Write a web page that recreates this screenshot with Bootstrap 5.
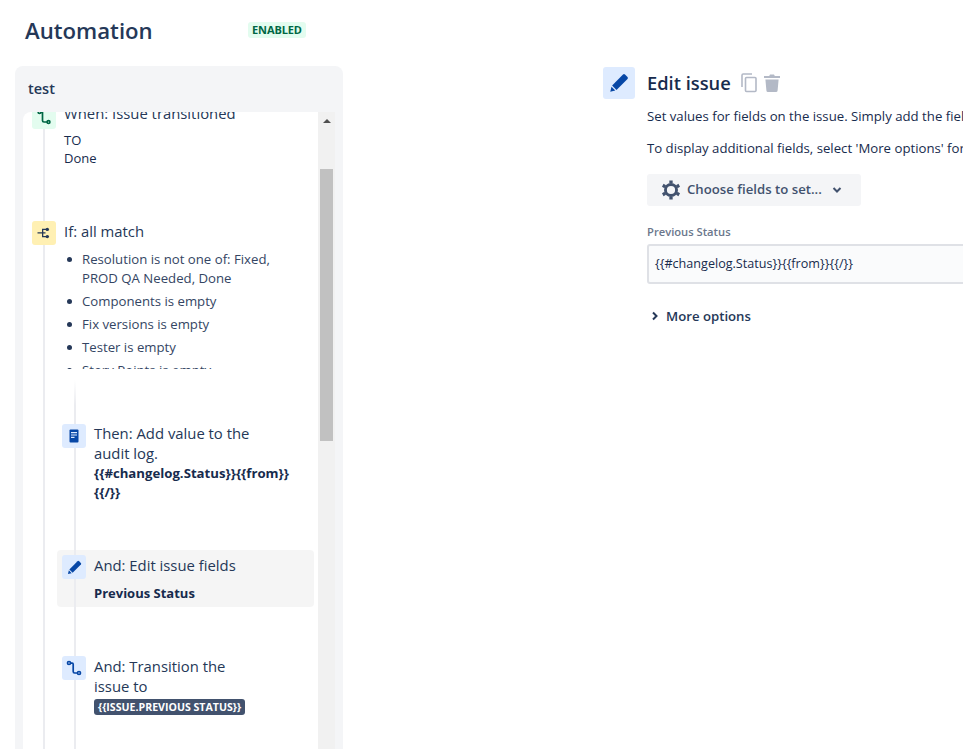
<!DOCTYPE html>
<html lang="en">
<head>
<meta charset="utf-8">
<title>Automation</title>
<link href="https://cdn.jsdelivr.net/npm/bootstrap@5.3.0/dist/css/bootstrap.min.css" rel="stylesheet">
<style>
html,body{height:749px;overflow:hidden}
body{font-family:"Open Sans","Noto Sans","Liberation Sans",sans-serif;color:#172b4d;font-size:13px;background:#fff}
.page-shell{width:963px;height:749px;overflow:hidden}
.side{width:343px;flex:none;padding-left:15px}
.head-row{height:66px;padding-left:10px;padding-bottom:4px}
.head-title{font-size:22.2px;font-weight:600;line-height:34px;margin:0;width:223px;color:#253858}
.state-tag{font-size:11px;font-weight:700;line-height:16px;height:16px;padding:0 4px;border-radius:3px;background:#e3fcef;color:#006644;margin-top:-2px;letter-spacing:-.1px}
.flow-panel{background:#f4f5f7;border-radius:8px 8px 0 0;height:683px;padding:0 8px}
.flow-name{font-size:14.5px;font-weight:600;height:46px;line-height:46px;padding-left:5px;color:#253858}
.flow-view{height:637px;overflow:hidden;background:#fff;border-radius:8px 0 0 0;position:relative}
.flow-inner{width:295px;flex:none;position:relative;height:637px;overflow:hidden}
.flow-strip{margin-top:-7px;position:relative}
.rail-a{position:absolute;left:20px;top:0;bottom:0;width:2px;background:#ebecf0}
.rail-b{position:absolute;left:51px;top:275px;bottom:0;width:2px;background:linear-gradient(#fff,#ebecf0 25px)}
.bar-track{width:17px;flex:none;background:#f1f1f1;position:relative;display:flex;flex-direction:column;align-items:center}
.bar-up{width:0;height:0;border:4px solid transparent;border-top:0;border-bottom-color:#505050;margin-top:7px}
.bar-thumb{width:13px;height:272px;background:#c1c1c1;margin-top:46px}
.step{display:flex;position:relative}
.chip{width:24px;height:24px;border-radius:3px;flex:none;display:flex;align-items:center;justify-content:center;margin-right:8px}
.chip-green{background:#e3fcef;color:#006644}
.chip-yellow{background:#fff0b3;color:#253858}
.chip-blue{background:#deebff;color:#0747a6}
.step-title{font-size:14.85px;line-height:20px;width:190px;color:#253858}
.step-title-narrow{width:160px}
.step-title-when{margin-top:-2px}
.step-title-then{margin-top:-1px}
.step-a{margin-left:9px}
.step-b{margin-left:39px}
.step-gap-if{margin-top:54px}
.step-gap-then{margin-top:55px}
.step-gap-last{margin-top:49px}
.to-lines{line-height:18px;margin-top:8px}
.cond-list{margin:9px 0 0;padding-left:18px;list-style:none;font-size:13.2px;line-height:19px;height:119px;overflow:hidden;width:230px;color:#344563}
.cond-list li{margin-bottom:4px;position:relative}
.cond-list li::before{content:"";position:absolute;left:-15px;top:7px;width:5px;height:5px;border-radius:50%;background:#253858}
.code-lines{font-size:13.2px;font-weight:700;line-height:19px;margin-top:1px;width:200px;overflow-wrap:anywhere}
.picked{background:rgba(244,244,244,.9);border-radius:4px;margin-left:34px;margin-top:48px;padding:5px 5px;width:257px;height:57px}
.picked .step-b{margin-left:0}
.picked-name{font-size:13px;font-weight:700;line-height:18px;margin-top:9px}
.var-tag{display:inline-block;background:#42526e;color:#fff;font-size:10.6px;font-weight:700;line-height:16px;height:16px;border-radius:3px;padding:0 4px;margin-top:3px;white-space:nowrap}
.strip-end{height:120px}
.detail{margin-left:260px;padding-top:66px;width:360px;flex:none}
.big-chip{width:32px;height:32px;background:#deebff;color:#0747a6;border-radius:3px;flex:none;display:flex;align-items:center;justify-content:center;margin-right:12px}
.detail-title{font-size:18.3px;font-weight:600;line-height:34px;margin:0 10px 0 0;color:#172b4d}
.detail-body{margin-left:44px;width:400px}
.detail-text{white-space:nowrap;font-size:13.2px;line-height:18px;margin:0 0 14px}
.detail-text-first{margin-top:7px}
.pick-btn{height:32px;width:214px;margin-top:17px;background:#f4f5f7;border:0;border-radius:3px;color:#42526e;font-size:13.2px;font-weight:600;display:flex;align-items:center;padding:0 0 0 14px}
.gear-ico{margin-right:6px}
.chev-ico{margin-left:10px}
.copy-ico{margin-right:7px}
.field-label{font-size:11.2px;font-weight:600;color:#6b778c;line-height:16px;margin:18px 0 4px}
.field-box{height:40px;width:420px;border:2px solid #dfe1e6;background:#fafbfc;border-radius:3px;padding:0 6px;font-size:12.6px;line-height:36px;white-space:nowrap}
.more-row{margin-top:22px;font-size:13.2px;font-weight:600;line-height:20px;color:#253858}
.more-label{margin-left:3px}
</style>
</head>
<body>
<div class="page-shell d-flex">
  <div class="side">
    <div class="head-row d-flex align-items-center">
      <h1 class="head-title">Automation</h1>
      <span class="state-tag">ENABLED</span>
    </div>
    <div class="flow-panel">
      <div class="flow-name">test</div>
      <div class="flow-view d-flex">
        <div class="flow-inner">
          <div class="flow-strip">
            <div class="rail-a"></div>
            <div class="rail-b"></div>
            <div class="step step-a">
              <span class="chip chip-green"><svg width="16" height="16" viewBox="0 0 16 16" fill="none" stroke="currentColor" stroke-width="1.7"><circle cx="3.5" cy="3" r="1.4"/><circle cx="12.5" cy="13" r="1.4"/><path d="M4.8 3.4H6.5V11.5Q6.5 13 8 13H11"/></svg></span>
              <div>
                <div class="step-title step-title-when">When: Issue transitioned</div>
                <div class="to-lines">TO<br>Done</div>
              </div>
            </div>
            <div class="step step-a step-gap-if">
              <span class="chip chip-yellow"><svg width="16" height="16" viewBox="0 0 16 16" fill="currentColor"><path d="M1.5 7.2H6V3.8H10V5H7.3V7.2H9.5V8.600H7.3V11H10V12.2H6V8.600H1.5Z"/><circle cx="11.3" cy="4.4" r="1.7"/><circle cx="11.3" cy="11.6" r="1.7"/></svg></span>
              <div>
                <div class="step-title">If: all match</div>
                <ul class="cond-list">
                  <li>Resolution is not one of: Fixed, PROD QA Needed, Done</li>
                  <li>Components is empty</li>
                  <li>Fix versions is empty</li>
                  <li>Tester is empty</li>
                  <li>Story Points is empty</li>
                </ul>
              </div>
            </div>
            <div class="step step-b step-gap-then">
              <span class="chip chip-blue"><svg width="16" height="16" viewBox="0 0 16 16"><path fill="currentColor" d="M4.5 1.5H11.5A1 1 0 0 1 12.500 2.500V13.500A1 1 0 0 1 11.500 14.500H4.500A1 1 0 0 1 3.500 13.500V2.500A1 1 0 0 1 4.500 1.500Z"/><path fill="#deebff" d="M5 4H11V5.2H5ZM5 6.400H11V7.600H5ZM5 8.800H8.500V10H5Z"/></svg></span>
              <div>
                <div class="step-title step-title-then">Then: Add value to the audit log.</div>
                <div class="code-lines">{{#changelog.Status}}{{from}}<br>{{/}}</div>
              </div>
            </div>
            <div class="picked">
              <div class="step step-b">
                <span class="chip chip-blue"><svg width="15" height="15" viewBox="0 0 16 16" fill="currentColor"><path d="M11.2 1.2Q12 .5 12.800 1.200L14.800 3.200Q15.500 4 14.800 4.800L6 13.500 2.500 10Z"/><path d="M2 11 5 14 1 15Z"/></svg></span>
                <div>
                  <div class="step-title">And: Edit issue fields</div>
                  <div class="picked-name">Previous Status</div>
                </div>
              </div>
            </div>
            <div class="step step-b step-gap-last">
              <span class="chip chip-blue"><svg width="16" height="16" viewBox="0 0 16 16" fill="none" stroke="currentColor" stroke-width="1.7"><circle cx="3" cy="3" r="1.5"/><circle cx="13" cy="13" r="1.5"/><path d="M4.5 3.2H6.2Q7.2 3.2 7.2 4.2V11.600Q7.2 13 8.600 13H11.400"/></svg></span>
              <div>
                <div class="step-title step-title-narrow">And: Transition the issue to</div>
                <span class="var-tag">{{ISSUE.PREVIOUS STATUS}}</span>
              </div>
            </div>
            <div class="strip-end"></div>
          </div>
        </div>
        <div class="bar-track"><span class="bar-up"></span><span class="bar-thumb"></span></div>
      </div>
    </div>
  </div>
  <div class="detail">
    <div class="d-flex align-items-center">
      <span class="big-chip"><svg width="20" height="20" viewBox="0 0 16 16" fill="currentColor"><path d="M11.2 1.2Q12 .5 12.800 1.200L14.800 3.200Q15.500 4 14.800 4.800L6 13.500 2.500 10Z"/><path d="M2 11 5 14 1 15Z"/></svg></span>
      <h2 class="detail-title">Edit issue</h2>
      <svg class="copy-ico" width="16" height="20" viewBox="0 0 16 20" fill="none" stroke="#b3b9c6" stroke-width="1.600"><path d="M1 14V2.200Q1 1 2.200 1H11"/><rect x="4.500" y="4.500" width="10.500" height="14" rx="1"/></svg>
      <svg width="16" height="18" viewBox="0 0 16 18" fill="#b3b9c6"><path d="M0 2H5.200L6 .6H10L10.800 2H16V4H0ZM1.400 5.400H14.600L13.600 16.400Q13.500 18 12 18H4Q2.500 18 2.400 16.400Z"/></svg>
    </div>
    <div class="detail-body">
      <p class="detail-text detail-text-first">Set values for fields on the issue. Simply add the fields you want to set.</p>
      <p class="detail-text">To display additional fields, select 'More options' for each field.</p>
      <button class="pick-btn" type="button">
        <svg class="gear-ico" width="20" height="20" viewBox="0 0 18 18" fill="none" stroke="#42526e" stroke-width="2.600"><circle cx="9" cy="9" r="5"/><path stroke-width="3" d="M9 .5V3M9 15V17.500M1.600 4.800 3.800 6M14.200 12 16.400 13.200M1.600 13.200 3.800 12M14.200 6 16.400 4.800"/></svg>
        <span>Choose fields to set...</span>
        <svg class="chev-ico" width="10" height="8" viewBox="0 0 10 8" fill="none" stroke="#42526e" stroke-width="2"><path d="M1.500 2 5 5.500 8.500 2"/></svg>
      </button>
      <div class="field-label">Previous Status</div>
      <div class="field-box">{{#changelog.Status}}{{from}}{{/}}</div>
      <div class="more-row d-flex align-items-center">
        <svg class="mx-1" width="8" height="10" viewBox="0 0 8 10" fill="none" stroke="#253858" stroke-width="2"><path d="M2 1.500 5.500 5 2 8.500"/></svg>
        <span class="more-label">More options</span>
      </div>
    </div>
  </div>
</div>
<script src="https://cdn.jsdelivr.net/npm/bootstrap@5.3.0/dist/js/bootstrap.bundle.min.js"></script>
</body>
</html>
